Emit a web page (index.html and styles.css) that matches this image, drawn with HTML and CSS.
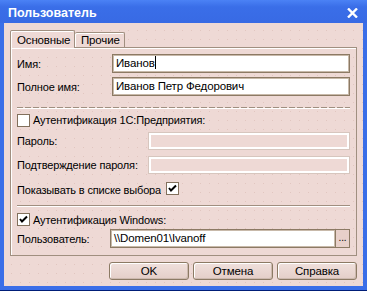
FILE: index.html
```html
<!DOCTYPE html>
<html lang="ru">

<head>
    <meta charset="UTF-8">
    <meta name="viewport" content="width=device-width, initial-scale=1.0">
    <title>Пользователь</title>
    <link rel="stylesheet" href="styles.css">
</head>

<body>
    <div class="window">
        <div class="titlebar">
            <span class="title">Пользователь</span>
            <svg class="close" width="11" height="10" viewBox="0 0 11 10">
                <path d="M1 0.5 L10 9.5 M10 0.5 L1 9.5" stroke="#fff" stroke-width="2.4" fill="none" />
            </svg>
        </div>
        <div class="client">
            <div class="tabs">
                <div class="tab active">Основные</div>
                <div class="tab">Прочие</div>
            </div>
            <div class="panel">
                <div class="row r-name">
                    <span class="lbl w-short">Имя:</span>
                    <div class="field">Иванов<span class="caret"></span></div>
                </div>
                <div class="row r-full">
                    <span class="lbl w-short">Полное имя:</span>
                    <div class="field">Иванов Петр Федорович</div>
                </div>
                <div class="sep dashed"></div>
                <div class="row r-chk1">
                    <span class="check"></span>
                    <span class="chk-text">Аутентификация 1С:Предприятия:</span>
                </div>
                <div class="row r-pass">
                    <span class="lbl w-long">Пароль:</span>
                    <div class="field disabled"></div>
                </div>
                <div class="row r-conf">
                    <span class="lbl w-long">Подтверждение пароля:</span>
                    <div class="field disabled"></div>
                </div>
                <div class="row r-show">
                    <span class="clip">Показывать в списке выбора</span>
                    <span class="check on">
                        <svg width="11" height="11" viewBox="0 0 11 11"><path d="M2 5 L4 7.5 L9 2.5" stroke="#000" stroke-width="2" fill="none" /></svg>
                    </span>
                </div>
                <div class="sep"></div>
                <div class="row r-chk2">
                    <span class="check on">
                        <svg width="11" height="11" viewBox="0 0 11 11"><path d="M2 5 L4 7.5 L9 2.5" stroke="#000" stroke-width="2" fill="none" /></svg>
                    </span>
                    <span class="chk-text">Аутентификация Windows:</span>
                </div>
                <div class="row r-user">
                    <span class="lbl w-user">Пользователь:</span>
                    <div class="field">\\Domen01\Ivanoff</div>
                    <div class="dots">...</div>
                </div>
            </div>
            <div class="buttons">
                <div class="btn">OK</div>
                <div class="btn">Отмена</div>
                <div class="btn">Справка</div>
            </div>
        </div>
    </div>
</body>

</html>
```

FILE: styles.css
```css
body {
    margin: 0;
    padding: 0;
    font-family: "Liberation Sans", Arial, sans-serif;
    font-size: 11px;
    letter-spacing: -0.15px;
    color: rgb(0, 0, 0);
}

.window {
    width: 367px;
    height: 291px;
    box-sizing: border-box;
    background-color: rgb(58, 110, 232);
    border-bottom: 1px solid rgb(0, 30, 120);
    padding: 0 4px 4px 4px;
    display: flex;
    flex-direction: column;
}

.titlebar {
    height: 23px;
    display: flex;
    align-items: center;
    justify-content: space-between;
    background: linear-gradient(rgb(75, 130, 245), rgb(58, 110, 232) 30%, rgb(56, 106, 228));
    margin: 0 -4px;
    padding-left: 8px;
    padding-right: 9px;
}

.title {
    color: rgb(255, 255, 255);
    font-weight: bold;
    font-size: 12.5px;
    letter-spacing: 0;
    margin-top: 2px;
}

.close {
    margin-top: 2px;
}

.client {
    flex: 1;
    background-color: rgb(238, 217, 213);
    background-image: radial-gradient(rgba(205, 170, 160, 0.4) 0.6px, transparent 0.9px);
    background-size: 9px 9px;
    background-position: 3px 3px;
    display: flex;
    flex-direction: column;
}

.tabs {
    display: flex;
    align-items: flex-end;
    margin: 7px 0 0 6px;
    height: 17px;
    position: relative;
    z-index: 1;
}

.tab {
    box-sizing: border-box;
    height: 15px;
    padding: 0 6px;
    line-height: 14px;
    border: 1px solid rgb(160, 143, 128);
    border-bottom: none;
    border-radius: 2px 2px 0 0;
    background-color: rgb(238, 217, 213);
    box-shadow: inset 1px 1px 0 rgb(255, 255, 255);
    font-size: 11.5px;
}

.tab.active {
    height: 18px;
    margin-bottom: -1px;
    line-height: 18px;
    width: 65px;
}

.tab.active + .tab {
    border-left: none;
    width: 50px;
}

.panel {
    box-sizing: border-box;
    height: 209px;
    margin: 0 6px;
    border: 1px solid rgb(160, 143, 128);
    box-shadow: inset 1px 1px 0 rgb(255, 255, 255);
    padding: 6px 6px 0 6px;
    display: flex;
    flex-direction: column;
}

.row {
    display: flex;
    align-items: center;
}

.r-name {
    height: 19px;
}

.r-full {
    height: 19px;
    margin-top: 4px;
}

.r-chk1 {
    height: 14px;
    margin-top: 4px;
}

.r-pass {
    height: 18px;
    margin-top: 5px;
}

.r-conf {
    height: 18px;
    margin-top: 6px;
}

.r-show {
    height: 13px;
    margin-top: 8px;
}

.r-chk2 {
    height: 13px;
    margin-top: 6px;
}

.r-user {
    height: 19px;
    margin-top: 3px;
}

.lbl {
    flex: none;
}

.w-short {
    width: 95px;
}

.w-long {
    width: 131px;
}

.w-user {
    width: 93px;
}

.field {
    flex: 1;
    box-sizing: border-box;
    height: 100%;
    background-color: rgb(255, 255, 255);
    border: 1px solid rgb(140, 122, 100);
    box-shadow: inset 0 0 0 1px rgb(200, 185, 170);
    padding: 0 3px;
    line-height: 17px;
    font-size: 11.5px;
    white-space: nowrap;
}

.field.disabled {
    background-color: rgb(238, 217, 213);
    border: 1px solid rgb(215, 198, 190);
    box-shadow: inset 0 0 0 2px rgb(255, 255, 255);
}

.caret {
    display: inline-block;
    width: 1px;
    height: 13px;
    background-color: rgb(0, 0, 0);
    vertical-align: -2px;
}

.sep {
    height: 1px;
    margin-top: 10px;
    background-color: rgb(160, 143, 128);
    border-bottom: 1px solid rgb(255, 255, 255);
}

.sep.dashed {
    margin-top: 11px;
    background: repeating-linear-gradient(90deg, rgb(160, 143, 128) 0 6px, transparent 6px 8px);
}

.check {
    flex: none;
    box-sizing: border-box;
    width: 13px;
    height: 13px;
    background-color: rgb(255, 255, 255);
    border: 1px solid rgb(130, 112, 92);
    display: flex;
    align-items: center;
    justify-content: center;
}

.chk-text {
    margin-left: 3px;
}

.clip {
    display: inline-block;
    height: 12px;
    overflow: hidden;
    line-height: 14px;
    margin-right: 5px;
    margin-top: 1px;
}

.dots {
    flex: none;
    box-sizing: border-box;
    width: 14px;
    height: 100%;
    background-color: rgb(232, 208, 202);
    border: 1px solid rgb(140, 122, 100);
    border-left: none;
    text-align: center;
    line-height: 16px;
    font-size: 10px;
}

.buttons {
    display: flex;
    justify-content: flex-end;
    gap: 4px;
    margin: 6px 6px 0 0;
}

.btn {
    box-sizing: border-box;
    width: 80px;
    height: 18px;
    border: 1px solid rgb(140, 122, 100);
    border-radius: 3px;
    background: linear-gradient(rgb(240, 224, 220), rgb(228, 206, 200));
    box-shadow: inset 1px 1px 0 rgb(255, 255, 255), inset -1px -1px 0 rgb(205, 185, 175);
    text-align: center;
    line-height: 16px;
    font-size: 11.5px;
}
```
